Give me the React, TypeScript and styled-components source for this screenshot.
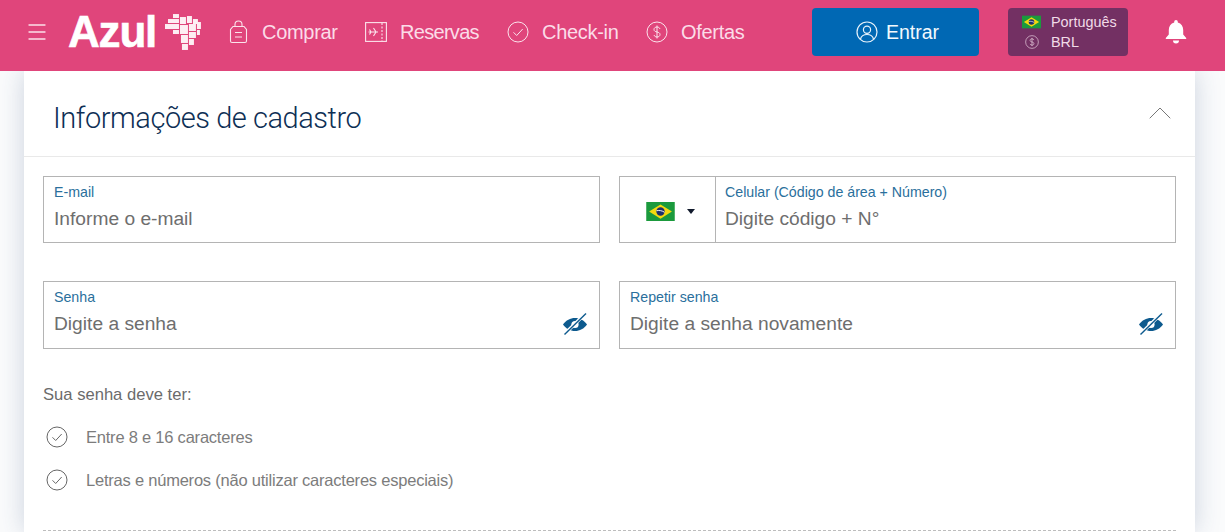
import React from "react";
import styled, { createGlobalStyle } from "styled-components";
import { ChevronUp, Menu } from "lucide-react";

const GlobalStyle = createGlobalStyle`
  html, body {
    margin: 0;
    height: 100%;
    overflow: hidden;
    background: #ffffff;
    font-family: "Liberation Sans", Arial, sans-serif;
  }
  * {
    box-sizing: border-box;
  }
`;

const Flag = ({ width, height }: { width: number; height: number }) => (
  <svg width={width} height={height} viewBox="0 0 30 20">
    <rect width="30" height="20" fill="#1b9a3d" />
    <path d="M15 2.5 27 10 15 17.5 3 10Z" fill="#f5d90f" />
    <circle cx="15" cy="10" r="4.4" fill="#1f2f6b" />
    <path d="M10.8 9.2c3-.6 6-.1 8.4 1.6" stroke="#fff" strokeWidth="1" fill="none" />
  </svg>
);

const BagIcon = () => (
  <svg width="19" height="24" viewBox="0 0 19 24" fill="none" stroke="#fbe3ec" strokeWidth="1.1">
    <path d="M4 6.500h11l2.500 3v11.500a1.500 1.500 0 0 1-1.500 1.500H3A1.500 1.500 0 0 1 1.500 21V9.500Z" />
    <path d="M6 6.500V4.500a3.500 3.500 0 0 1 7 0v2" />
    <path d="M6 12.500h7M6 17h7" />
  </svg>
);

const TicketIcon = () => (
  <svg width="22" height="20" viewBox="0 0 22 20" fill="none" stroke="#fbe3ec" strokeWidth="1.1">
    <rect x="0.600" y="0.600" width="20.800" height="18.800" />
    <path d="M17 1v18" strokeDasharray="2 1.500" />
    <path d="M3.500 10h9.500M8.500 6l2.500 4-2.500 4M4.500 7.500l1.500 2.500-1.500 2.500" />
  </svg>
);

const CheckIcon = ({ size, color }: { size: number; color: string }) => (
  <svg width={size} height={size} viewBox="0 0 22 22" fill="none" stroke={color} strokeWidth="1">
    <circle cx="11" cy="11" r="10" />
    <path d="M6.500 11.300l3.200 3.200 6-6.500" />
  </svg>
);

const DollarIcon = ({ size, color }: { size: number; color: string }) => (
  <svg width={size} height={size} viewBox="0 0 22 22" fill="none" stroke={color} strokeWidth="1">
    <circle cx="11" cy="11" r="10" />
    <path d="M14 8c-.4-1.300-1.500-2-3-2-1.700 0-3 .9-3 2.500s1.300 2.100 3 2.500 3 .9 3 2.500-1.300 2.500-3 2.500c-1.500 0-2.600-.7-3-2M11 4.500v13" />
  </svg>
);

const UserIcon = () => (
  <svg width="22" height="22" viewBox="0 0 22 22" fill="none" stroke="#e8f3fb" strokeWidth="1.200">
    <circle cx="11" cy="11" r="10" />
    <circle cx="11" cy="8.800" r="3.600" />
    <path d="M4.500 18c.8-3 3.400-4.500 6.500-4.500s5.700 1.500 6.500 4.500" />
  </svg>
);

const BellIcon = () => (
  <svg width="24" height="26" viewBox="0 0 24 26" fill="#ffffff">
    <path d="M12 1a1.800 1.800 0 0 1 1.800 1.800v.7c3.500.9 5.400 3.800 5.400 7.500v4.500l3 3.500v1H1.800v-1l3-3.500V11c0-3.700 1.900-6.600 5.400-7.500v-.7A1.800 1.800 0 0 1 12 1Z" />
    <path d="M9 21.500h6a3 3 0 0 1-6 0Z" />
  </svg>
);

const EyeOffIcon = () => (
  <svg width="26" height="24" viewBox="0 0 26 24">
    <path d="M1 12.500C4 8.300 8.300 6 13 6s9 2.300 12 6.500C22 16.700 17.700 19 13 19S4 16.700 1 12.500Z" fill="#0d5a8e" />
    <circle cx="13" cy="12.500" r="3.600" fill="#ffffff" />
    <path d="M23.500 1.500 2 22.500" stroke="#ffffff" strokeWidth="3.200" />
    <path d="M24 1.500 2.500 22.500" stroke="#0d5a8e" strokeWidth="1.400" />
  </svg>
);

// Brazil map built from small state blocks
const mapBlocks = [
  [8, 1, 6, 4], [15, 4, 6, 7], [22, 3, 5, 7], [28, 6, 5, 5], [3, 6, 11, 4],
  [0, 11, 14, 5], [15, 12, 8, 9], [24, 11, 7, 7], [32, 9, 4, 7], [8, 17, 6, 4],
  [16, 22, 7, 8], [24, 19, 7, 6], [32, 17, 3, 5], [24, 26, 5, 6], [17, 31, 6, 6],
];

const BrazilLogo = () => (
  <svg width="37" height="38" viewBox="0 0 37 38" fill="#fdeef3">
    {mapBlocks.map(([x, y, w, h], i) => (
      <rect key={i} x={x} y={y} width={w} height={h} />
    ))}
  </svg>
);

const Page = styled.div`
  width: 1225px;
  height: 532px;
  display: flex;
  flex-direction: column;
  overflow: hidden;
  background: #fafbfc;
`;

const Header = styled.header`
  height: 71px;
  flex: none;
  display: flex;
  align-items: center;
  padding-bottom: 7px;
  background: #e0457b;
  position: relative;
  z-index: 1;
`;

const MenuButton = styled.span`
  display: flex;
  color: #fbdfe9;
  margin-left: 25px;
`;

const Logo = styled.div`
  display: flex;
  align-items: center;
  gap: 9px;
  margin-left: 19px;
  width: 134px;
`;

const LogoText = styled.span`
  font-size: 44px;
  font-weight: 700;
  letter-spacing: -1.2px;
  color: #ffffff;
  -webkit-text-stroke: 0.6px #ffffff;
`;

const Nav = styled.nav`
  display: flex;
  align-items: center;
  margin-left: 25px;
`;

const NavItem = styled.a<{ $width: number; $spacing?: number }>`
  display: flex;
  align-items: center;
  gap: 13px;
  width: ${(p) => p.$width}px;
  font-size: 20px;
  letter-spacing: ${(p) => p.$spacing ?? -0.3}px;
  color: #fbdce8;
`;

const NavIcon = styled.span`
  width: 22px;
  display: flex;
  justify-content: center;
`;

const LoginButton = styled.button`
  width: 167px;
  height: 48px;
  margin-left: 6px;
  padding-left: 10px;
  display: flex;
  align-items: center;
  justify-content: center;
  gap: 8px;
  border: 0;
  border-radius: 4px;
  background: #0068b4;
  color: #f2f9fd;
  font-family: inherit;
  font-size: 19.500px;
`;

const LocaleBox = styled.div`
  width: 120px;
  height: 48px;
  margin-left: 29px;
  padding: 4px 0 0 14px;
  display: grid;
  grid-template-columns: 19px auto;
  column-gap: 10px;
  align-items: center;
  justify-items: center;
  align-content: start;
  border-radius: 4px;
  background: #733063;
  color: #f1dbe8;
  font-size: 14.400px;
  line-height: 20px;
`;

const LocaleText = styled.span`
  justify-self: start;
`;

const BellButton = styled.span`
  display: flex;
  margin-left: 36px;
`;

const Card = styled.main`
  width: 1171px;
  margin-left: 24px;
  flex: 1;
  background: #ffffff;
  box-shadow: 0 0 24px rgba(40, 70, 120, 0.22);
`;

const CardHeader = styled.div`
  height: 86px;
  padding: 0 15px 0 29px;
  display: flex;
  align-items: center;
  justify-content: space-between;
  border-bottom: 1px solid #e9e9e9;
`;

const Title = styled.h2`
  margin: 8px 0 0;
  font-family: Roboto, "Liberation Sans", sans-serif;
  font-size: 29px;
  font-weight: 300;
  letter-spacing: -0.45px;
  color: #0e2f55;
`;

const Chevron = styled.span`
  display: flex;
  color: #777777;
  margin-bottom: 2px;
`;

const CardBody = styled.div`
  padding: 19px 19px 0;
`;

const FieldGrid = styled.div`
  display: grid;
  grid-template-columns: 557px 557px;
  grid-template-rows: 67px 68px;
  column-gap: 19px;
  row-gap: 38px;
`;

const Field = styled.div`
  display: flex;
  border: 1px solid #b4b4b4;
  position: relative;
`;

const FieldBody = styled.div<{ $inset?: number }>`
  flex: 1;
  padding: 7px 10px 0 ${(p) => p.$inset ?? 10}px;
  display: flex;
  flex-direction: column;
`;

const FieldLabel = styled.label`
  font-size: 14.200px;
  line-height: 16px;
  color: #2a6f9c;
`;

const FieldValue = styled.span`
  margin-top: 7px;
  font-size: 19.200px;
  line-height: 24px;
  color: #6e6e6e;
`;

const CountryPicker = styled.div`
  width: 96px;
  flex: none;
  display: flex;
  align-items: center;
  justify-content: center;
  gap: 12px;
  padding: 4px 0 0 6px;
  border-right: 1px solid #b4b4b4;
`;

const Caret = styled.span`
  width: 0;
  height: 0;
  border-left: 4px solid transparent;
  border-right: 4px solid transparent;
  border-top: 5px solid #111a2c;
`;

const EyeButton = styled.span`
  position: absolute;
  right: 11px;
  top: 30px;
  display: flex;
`;

const RulesTitle = styled.p`
  margin: 35px 0 0;
  font-size: 16.600px;
  line-height: 22px;
  color: #6b6b6b;
`;

const RuleList = styled.ul`
  margin: 20px 0 0 3px;
  padding: 0;
  list-style: none;
  display: flex;
  flex-direction: column;
  gap: 21px;
`;

const Rule = styled.li`
  display: flex;
  align-items: center;
  gap: 18px;
  height: 22px;
  font-size: 16.500px;
  letter-spacing: -0.22px;
  color: #7c7c7c;
`;

const Divider = styled.hr`
  margin: 39px 0 0;
  border: 0;
  border-top: 1px dashed #bdbdbd;
`;

export default function App() {
  return (
    <Page>
      <GlobalStyle />
      <Header>
        <MenuButton>
          <Menu size={24} strokeWidth={1.3} />
        </MenuButton>
        <Logo>
          <LogoText>Azul</LogoText>
          <BrazilLogo />
        </Logo>
        <Nav>
          <NavItem $width={138}>
            <NavIcon><BagIcon /></NavIcon>
            Comprar
          </NavItem>
          <NavItem $width={142} $spacing={-0.7}>
            <NavIcon><TicketIcon /></NavIcon>
            Reservas
          </NavItem>
          <NavItem $width={139}>
            <NavIcon><CheckIcon size={22} color="#fbe3ec" /></NavIcon>
            Check-in
          </NavItem>
          <NavItem $width={160}>
            <NavIcon><DollarIcon size={22} color="#fbe3ec" /></NavIcon>
            Ofertas
          </NavItem>
        </Nav>
        <LoginButton>
          <UserIcon />
          Entrar
        </LoginButton>
        <LocaleBox>
          <Flag width={19} height={14} />
          <LocaleText>Português</LocaleText>
          <DollarIcon size={14} color="#f1dbe8" />
          <LocaleText>BRL</LocaleText>
        </LocaleBox>
        <BellButton>
          <BellIcon />
        </BellButton>
      </Header>
      <Card>
        <CardHeader>
          <Title>Informações de cadastro</Title>
          <Chevron>
            <ChevronUp size={40} strokeWidth={0.6} />
          </Chevron>
        </CardHeader>
        <CardBody>
          <FieldGrid>
            <Field>
              <FieldBody>
                <FieldLabel>E-mail</FieldLabel>
                <FieldValue>Informe o e-mail</FieldValue>
              </FieldBody>
            </Field>
            <Field>
              <CountryPicker>
                <Flag width={29} height={19} />
                <Caret />
              </CountryPicker>
              <FieldBody $inset={9}>
                <FieldLabel>Celular (Código de área + Número)</FieldLabel>
                <FieldValue>Digite código + N°</FieldValue>
              </FieldBody>
            </Field>
            <Field>
              <FieldBody>
                <FieldLabel>Senha</FieldLabel>
                <FieldValue>Digite a senha</FieldValue>
              </FieldBody>
              <EyeButton><EyeOffIcon /></EyeButton>
            </Field>
            <Field>
              <FieldBody>
                <FieldLabel>Repetir senha</FieldLabel>
                <FieldValue>Digite a senha novamente</FieldValue>
              </FieldBody>
              <EyeButton><EyeOffIcon /></EyeButton>
            </Field>
          </FieldGrid>
          <RulesTitle>Sua senha deve ter:</RulesTitle>
          <RuleList>
            <Rule>
              <CheckIcon size={22} color="#666666" />
              Entre 8 e 16 caracteres
            </Rule>
            <Rule>
              <CheckIcon size={22} color="#666666" />
              Letras e números (não utilizar caracteres especiais)
            </Rule>
          </RuleList>
          <Divider />
        </CardBody>
      </Card>
    </Page>
  );
}
